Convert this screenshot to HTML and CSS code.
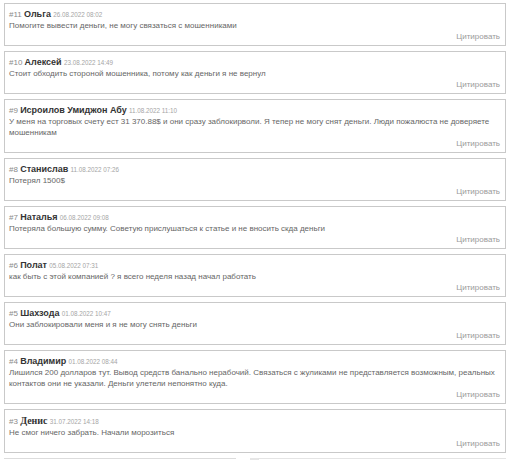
FILE: index.html
```html
<!DOCTYPE html>
<html lang="ru">
<head>
<meta charset="utf-8">
<link rel="stylesheet" href="styles.css">
</head>
<body>
<div class="list">
  <div class="comment">
    <div class="head"><span class="num">#11</span> <span class="name">Ольга</span> <span class="date">26.08.2022 08:02</span></div>
    <div class="text">Помогите вывести деньги, не могу связаться с мошенниками</div>
    <div class="quote">Цитировать</div>
  </div>
  <div class="comment">
    <div class="head"><span class="num">#10</span> <span class="name">Алексей</span> <span class="date">23.08.2022 14:49</span></div>
    <div class="text">Стоит обходить стороной мошенника, потому как деньги я не вернул</div>
    <div class="quote">Цитировать</div>
  </div>
  <div class="comment">
    <div class="head"><span class="num">#9</span> <span class="name">Исроилов Умиджон Абу</span> <span class="date">11.08.2022 11:10</span></div>
    <div class="text">У меня на торговых счету ест 31 370.88$ и они сразу заблокирволи. Я тепер не могу снят деньги. Люди пожалюста не доверяете мошенникам</div>
    <div class="quote">Цитировать</div>
  </div>
  <div class="comment">
    <div class="head"><span class="num">#8</span> <span class="name">Станислав</span> <span class="date">11.08.2022 07:26</span></div>
    <div class="text">Потерял 1500$</div>
    <div class="quote">Цитировать</div>
  </div>
  <div class="comment">
    <div class="head"><span class="num">#7</span> <span class="name">Наталья</span> <span class="date">06.08.2022 09:08</span></div>
    <div class="text">Потеряла большую сумму. Советую прислушаться к статье и не вносить скда деньги</div>
    <div class="quote">Цитировать</div>
  </div>
  <div class="comment">
    <div class="head"><span class="num">#6</span> <span class="name">Полат</span> <span class="date">05.08.2022 07:31</span></div>
    <div class="text">как быть с этой компанией ? я всего неделя назад начал работать</div>
    <div class="quote">Цитировать</div>
  </div>
  <div class="comment">
    <div class="head"><span class="num">#5</span> <span class="name">Шахзода</span> <span class="date">01.08.2022 10:47</span></div>
    <div class="text">Они заблокировали меня и я не могу снять деньги</div>
    <div class="quote">Цитировать</div>
  </div>
  <div class="comment">
    <div class="head"><span class="num">#4</span> <span class="name">Владимир</span> <span class="date">01.08.2022 08:44</span></div>
    <div class="text">Лишился 200 долларов тут. Вывод средств банально нерабочий. Связаться с жуликами не представляется возможным, реальных контактов они не указали. Деньги улетели непонятно куда.</div>
    <div class="quote">Цитировать</div>
  </div>
  <div class="comment">
    <div class="head"><span class="num">#3</span> <span class="name serif">Денис</span> <span class="date">31.07.2022 14:18</span></div>
    <div class="text">Не смог ничего забрать. Начали морозиться</div>
    <div class="quote">Цитировать</div>
  </div>
  <div class="more">
    <span class="more-line"></span>
    <span class="more-btn"></span>
    <span class="more-box"></span>
  </div>
</div>
</body>
</html>
```

FILE: styles.css
```css
html, body {
  margin: 0;
  padding: 0;
  background: #fff;
}
body {
  font-family: "Liberation Sans", Arial, sans-serif;
  overflow: hidden;
}
.list {
  padding: 3px 6px 0 4px;
  display: flex;
  flex-direction: column;
  gap: 5px;
}
.comment {
  border: 1px solid #c9c9c9;
  padding: 5px 5px 3px 4px;
}
.head {
  font-size: 8px;
  line-height: 11px;
  color: #888;
  white-space: nowrap;
}
.num {
  color: #8a8a8a;
}
.name {
  font-size: 9px;
  font-weight: bold;
  color: #333;
}
.name.serif {
  font-family: "Liberation Serif", "Times New Roman", serif;
  font-size: 10px;
}
.date {
  font-size: 6.3px;
  color: #a5a5a5;
}
.text {
  font-size: 8px;
  line-height: 11px;
  color: #666;
}
.quote {
  font-size: 8px;
  line-height: 11px;
  color: #9a9a9a;
  text-align: right;
}
.more {
  display: flex;
  align-items: flex-start;
  height: 10px;
}
.more-line {
  width: 232px;
  border-top: 1px solid #dcdcdc;
}
.more-btn {
  width: 8px;
  height: 8px;
  margin-left: 14px;
  background: #e6e6e6;
}
.more-box {
  flex: 1;
  height: 10px;
  border-top: 1px solid #e4e4e4;
  border-left: 1px solid #e4e4e4;
}
```
